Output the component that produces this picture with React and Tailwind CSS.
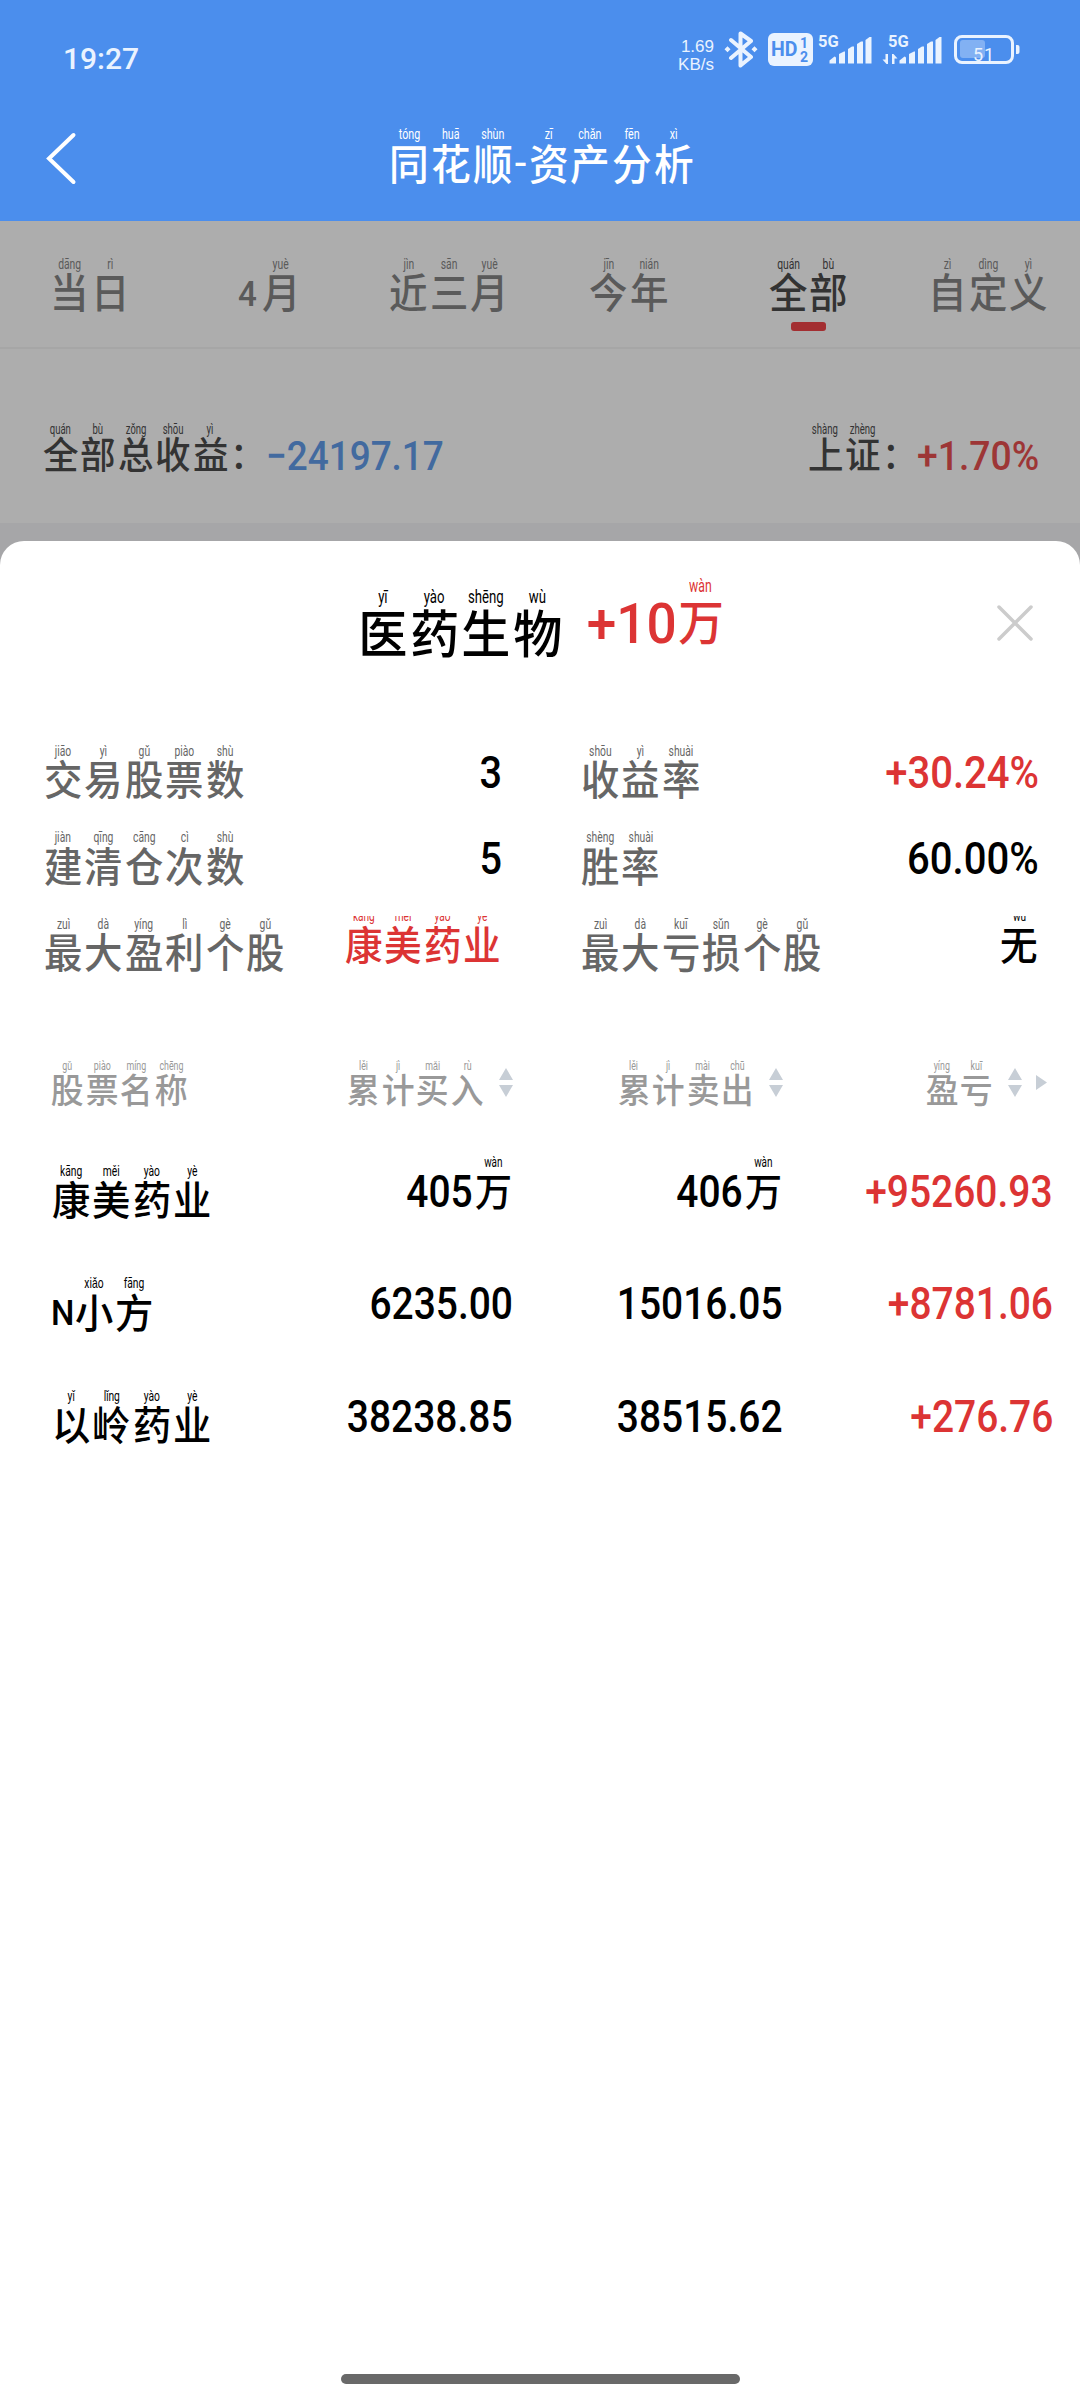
import React from 'react';
import clsx from 'clsx';

const tabs = [
    { text: '当日', pinyin: 'dāng rì' },
    { prefix: '4', text: '月', pinyin: 'yuè' },
    { text: '近三月', pinyin: 'jìn sān yuè' },
    { text: '今年', pinyin: 'jīn nián' },
    { text: '全部', pinyin: 'quán bù', active: true },
    { text: '自定义', pinyin: 'zì dìng yì' },
];

const columns = [
    { text: '累计买入', pinyin: 'lěi jì mǎi rù' },
    { text: '累计卖出', pinyin: 'lěi jì mài chū' },
    { text: '盈亏', pinyin: 'yíng kuī', more: true },
];

const stocks = [
    { text: '康美药业', pinyin: 'kāng měi yào yè', buy: '405', sell: '406', wan: true, profit: '+95260.93' },
    { prefix: 'N', text: '小方', pinyin: 'xiǎo fāng', buy: '6235.00', sell: '15016.05', profit: '+8781.06' },
    { text: '以岭药业', pinyin: 'yǐ lǐng yào yè', buy: '38238.85', sell: '38515.62', profit: '+276.76' },
];

// Characters with their pinyin above, one em per character
const Ruby = ({ text, pinyin, prefix, className }) => {
    const syllables = pinyin.split(' ');
    return (
        <div className={clsx('flex items-end leading-none', className)}>
            {prefix && (
                <span className="w-[0.56em]">
                    <span className="block origin-left scale-x-[0.94] font-['Roboto',sans-serif] text-[0.87em] font-medium leading-[1.03]">{prefix}</span>
                </span>
            )}
            {text.split('').map((char, i) => (
                <div key={i} className="flex w-[1em] shrink-0 flex-col items-center">
                    <span className="h-[0.33em] whitespace-nowrap">
                        <span className="block scale-x-[0.69] font-['Roboto',sans-serif] text-[0.37em] font-normal leading-[0.89]">{syllables[i]}</span>
                    </span>
                    <span className="block h-[1em] scale-x-[0.95] font-['Noto_Sans_CJK_SC',sans-serif] font-medium">{char}</span>
                </div>
            ))}
        </div>
    );
};

const Num = ({ children, className }) => (
    <span className={clsx("block whitespace-nowrap font-['Roboto',sans-serif] font-medium leading-none", className)}>{children}</span>
);

const Signal = ({ data }) => (
    <svg className="overflow-visible" width="60" height="32" viewBox="0 0 60 32" fill="#eaf3ff">
        <text x="5" y="12" fontFamily="Roboto, sans-serif" fontSize="16.5" fontWeight="700">5G</text>
        {data && <path d="M5 19v10h-1.500l-4-4.500h3V19zM9 29V19h1.500l4 4.500h-3V29z" />}
        <path d="M16.500 28.500v-3l5-4q1.500 0 1.500 1.500v5.500z" />
        <path d="M26 28.500V19l5-2.500h1v12z" />
        <path d="M35 28.500V14l4-2.500h2v17z" />
        <path d="M44 28.500V9l4-2.500h2v22z" />
        <path d="M52.500 28.500V5l4-3h2v26.500z" />
    </svg>
);

const StatusBar = () => (
    <div className="flex h-[100px] items-start pl-[63px] pt-[30px] text-[#eaf3ff]">
        <Num className="mt-[14px] text-[30px]">19:27</Num>
        <div className="ml-auto mr-[59px] flex items-start">
            <div className="mr-px mt-[8px] w-[36px] text-right font-['Liberation_Sans',sans-serif] text-[17px] leading-[18px]">
                <div>1.69</div>
                <div>KB/s</div>
            </div>
            <svg className="ml-[9px]" width="35" height="38" viewBox="0 0 35 38" fill="none" stroke="#eaf3ff" strokeWidth="4">
                <path d="M7 10l20 17-10.500 8.500V3.500L27 11 7 28" strokeLinejoin="round" strokeLinecap="round" />
                <path d="M3.500 16.200l3 3-3 3-3-3zM30.500 16.200l3 3-3 3-3-3z" fill="#eaf3ff" stroke="none" />
            </svg>
            <div className="ml-[9px] mt-[3px] flex h-[33px] w-[45px] rounded-md bg-[#eaf3ff] font-['Roboto',sans-serif] font-bold leading-none text-[#4b8eed]">
                <span className="ml-[3px] mt-[7px] w-[29px] text-[19.5px]">HD</span>
                <span className="mt-[3px] flex flex-col text-[14px]">
                    <span>1</span>
                    <span>2</span>
                </span>
            </div>
            <div className="mt-[5px]"><Signal /></div>
            <div className="ml-[10px] mt-[5px]"><Signal data /></div>
            <svg className="ml-[11px] mt-[4px]" width="67" height="32" viewBox="0 0 67 32">
                <rect x="1.500" y="2.500" width="57" height="26" rx="6.500" fill="none" stroke="#eaf3ff" strokeWidth="3" />
                <rect x="6" y="6" width="25" height="18" rx="3" fill="#82b1f3" />
                <path d="M62 11h1.500q2 0 2 2v5q0 2-2 2H62z" fill="#eaf3ff" />
                <text x="19" y="27" fontFamily="Roboto, sans-serif" fontSize="18" letterSpacing="0.800" fill="#eaf3ff">51</text>
            </svg>
        </div>
    </div>
);

const Header = () => (
    <header className="h-[221px] bg-[#4b8eed]">
        <StatusBar />
        <div className="grid grid-cols-[1fr_auto_1fr] items-start pt-[28px]">
            <svg className="ml-[45px] mt-[3px]" width="32" height="56" viewBox="0 0 32 56" fill="none" stroke="#fff" strokeWidth="4">
                <path d="M28.500 4L4 27.500 28.500 51" strokeLinecap="round" />
            </svg>
            <div className="ml-[3px] flex items-end text-[41.8px] text-white">
                <Ruby text="同花顺" pinyin="tóng huā shùn" />
                <span className="w-[14px] text-center font-['Roboto',sans-serif] leading-none">-</span>
                <Ruby text="资产分析" pinyin="zī chǎn fēn xì" />
            </div>
        </div>
    </header>
);

const Tabs = () => (
    <nav className="h-[128px] border-b-2 border-[#a6a6a6]">
        <div className="grid w-[1078px] grid-cols-6 pt-[37px]">
            {tabs.map((tab) => (
                <div key={tab.text} className="flex flex-col items-center">
                    <Ruby {...tab} className={clsx('text-[40.5px]', tab.active ? 'text-[#333]' : 'text-[#5a5a5a]')} />
                    {tab.active && <div className="mt-[10px] h-[9px] w-[35px] rounded-[3px] bg-[#a32e31]" />}
                </div>
            ))}
        </div>
    </nav>
);

const Summary = () => (
    <section className="flex h-[174px] items-start justify-between pl-[42px] pr-[41px] pt-[74px]">
        <div className="flex items-start">
            <Ruby text="全部总收益：" pinyin="quán bù zǒng shōu yì" className="text-[37.4px] text-[#333]" />
            <Num className="mt-[13px] origin-left scale-x-[0.9] text-[41px] text-[#426a9f]">−24197.17</Num>
        </div>
        <div className="flex items-start">
            <Ruby text="上证：" pinyin="shàng zhèng" className="text-[37.4px] text-[#333]" />
            <Num className="-ml-[14px] mt-[13px] origin-right scale-x-[0.91] text-[41px] text-[#9d3636]">+1.70%</Num>
        </div>
    </section>
);

const Stat = ({ text, pinyin, children }) => (
    <div className="flex h-[86.3px] items-start justify-between">
        <Ruby text={text} pinyin={pinyin} className="text-[40.4px] text-[#666]" />
        {children}
    </div>
);

const Stats = () => (
    <section className="grid grid-cols-[459px_459px] gap-x-[78px] pl-[43px]">
        <Stat text="交易股票数" pinyin="jiāo yì gǔ piào shù">
            <Num className="mt-[6px] origin-right scale-x-[0.9] text-[44px]">3</Num>
        </Stat>
        <Stat text="收益率" pinyin="shōu yì shuài">
            <Num className="mt-[6px] origin-right scale-x-[0.91] text-[44px] text-[#dc3434]">+30.24%</Num>
        </Stat>
        <Stat text="建清仓次数" pinyin="jiàn qīng cāng cì shù">
            <Num className="mt-[6px] origin-right scale-x-[0.9] text-[44px]">5</Num>
        </Stat>
        <Stat text="胜率" pinyin="shèng shuài">
            <Num className="mt-[6px] origin-right scale-x-[0.91] text-[44px]">60.00%</Num>
        </Stat>
        <Stat text="最大盈利个股" pinyin="zuì dà yíng lì gè gǔ">
            <div className="-mt-[2px] overflow-hidden pb-1">
                <Ruby text="康美药业" pinyin="kāng měi yào yè" className="-mt-[6px] text-[39.6px] text-[#dc3434]" />
            </div>
        </Stat>
        <Stat text="最大亏损个股" pinyin="zuì dà kuī sǔn gè gǔ">
            <div className="-mt-[2px] overflow-hidden pb-1">
                <Ruby text="无" pinyin="wú" className="-mt-[6px] text-[39.6px]" />
            </div>
        </Stat>
    </section>
);

const SortIcon = () => (
    <svg className="ml-[14px]" width="14" height="29" viewBox="0 0 14 29" fill="#c7ced6">
        <path d="M7 0l7 12H0zM0 17h14L7 29z" />
    </svg>
);

const Amount = ({ value, wan }) => (
    <div className="flex items-start justify-end">
        <Num className="mt-[4px] origin-right scale-x-[0.865] text-[45px]">{value}</Num>
        {wan && <Ruby text="万" pinyin="wàn" className="-mt-[8px] ml-px text-[39px]" />}
    </div>
);

const StockTable = () => (
    <section>
        <div className="grid h-[104px] grid-cols-[242px_270.5px_270.5px_270px] items-start text-[34.6px] text-[#999]">
            <Ruby text="股票名称" pinyin="gǔ piào míng chēng" className="-mt-px pl-[50px]" />
            {columns.map((col) => (
                <div key={col.text} className={clsx('-mt-px flex items-start justify-end', col.more && 'pr-[6px]')}>
                    <Ruby text={col.text} pinyin={col.pinyin} />
                    <div className="mt-[8px]"><SortIcon /></div>
                    {col.more && (
                        <svg className="ml-[14px] mt-[15px]" width="11" height="15" viewBox="0 0 11 15" fill="#c7ced6">
                            <path d="M0 0l11 7.500L0 15z" />
                        </svg>
                    )}
                </div>
            ))}
        </div>
        {stocks.map((stock) => (
            <div key={stock.text} className="grid h-[112.6px] grid-cols-[242px_270.5px_270.5px_270px] items-start">
                <Ruby text={stock.text} pinyin={stock.pinyin} prefix={stock.prefix} className="pl-[51px] text-[40.3px]" />
                <Amount value={stock.buy} wan={stock.wan} />
                <Amount value={stock.sell} wan={stock.wan} />
                <div className="text-[#dc3434]"><Amount value={stock.profit} /></div>
            </div>
        ))}
    </section>
);

const Sheet = () => (
    <main className="flex h-[1859px] flex-col rounded-t-[24px] bg-white text-black">
        <div className="flex h-[204px] items-start pl-[357px] pr-[47px] pt-[38px]">
            <Ruby text="医药生物" pinyin="yī yào shēng wù" className="mt-[9px] text-[51.7px]" />
            <div className="ml-[18px] flex items-start text-[#dc3434]">
                <Num className="mt-[17px] origin-right scale-x-[0.95] text-[56px]">+10</Num>
                <Ruby text="万" pinyin="wàn" className="text-[48px]" />
            </div>
            <svg className="ml-auto mt-[26px]" width="36" height="36" viewBox="0 0 36 36" stroke="#ccc" strokeWidth="3.500" strokeLinecap="round">
                <path d="M2 2l32 32M34 2L2 34" />
            </svg>
        </div>
        <Stats />
        <div className="h-[57px]" />
        <StockTable />
        <div className="mx-auto mb-[16px] mt-auto h-[10px] w-[399px] rounded-full bg-[#696969]" />
    </main>
);

const App = () => {
    return (
        <div className="h-[2400px] w-[1080px] overflow-hidden bg-[#adadad]">
            <Header />
            <Tabs />
            <Summary />
            <div className="bg-[#a6a6a8] pt-[18px]">
                <Sheet />
            </div>
        </div>
    );
};

export default App;
